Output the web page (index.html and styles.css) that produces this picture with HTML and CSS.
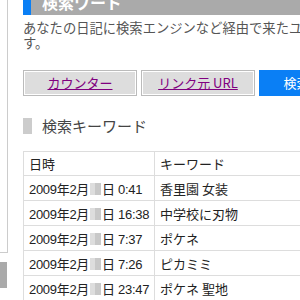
FILE: index.html
```html
<!DOCTYPE html>
<html lang="ja">
<head>
<meta charset="UTF-8">
<meta name="viewport" content="width=device-width, initial-scale=1.0">
<title>検索ワード</title>
<link rel="stylesheet" href="styles.css">
</head>
<body>
<div class="page">
    <div class="side">
        <div class="side-box"></div>
        <div class="side-bar"></div>
    </div>
    <div class="main">
        <h2 class="title"><span class="title-text">検索ワード</span></h2>
        <p class="desc">あなたの日記に検索エンジンなど経由で来たユーザーが使った検索キーワードを表示していま<br>す。</p>
        <ul class="tabs">
            <li class="tab"><a href="#">カウンター</a></li>
            <li class="tab"><a href="#">リンク元 URL</a></li>
            <li class="tab on">検索ワード</li>
        </ul>
        <h3 class="sub"><span class="mark"></span>検索キーワード</h3>
        <table class="log">
            <tr><th class="c-date">日時</th><th>キーワード</th></tr>
            <tr><td class="c-date">2009年2月<span class="blur"></span>日 0:41</td><td>香里園 女装</td></tr>
            <tr><td class="c-date">2009年2月<span class="blur"></span>日 16:38</td><td>中学校に刃物</td></tr>
            <tr><td class="c-date">2009年2月<span class="blur"></span>日 7:37</td><td>ポケネ</td></tr>
            <tr><td class="c-date">2009年2月<span class="blur"></span>日 7:26</td><td>ピカミミ</td></tr>
            <tr><td class="c-date">2009年2月<span class="blur"></span>日 23:47</td><td>ポケネ 聖地</td></tr>
            <tr><td class="c-date">2009年2月<span class="blur"></span>日 21:05</td><td>ポケネ</td></tr>
        </table>
    </div>
</div>
</body>
</html>
```

FILE: styles.css
```css
html, body {
    margin: 0;
    padding: 0;
    background: #fff;
    overflow: hidden;
}
body {
    font-family: "Noto Sans CJK JP", sans-serif;
    font-size: 13px;
    color: #222;
}
.page {
    display: flex;
    align-items: flex-start;
}
.side {
    width: 8px;
    flex: none;
}
.side-box {
    height: 253px;
    border-right: 1px solid #ccc;
    border-bottom: 1px solid #ccc;
    box-sizing: border-box;
}
.side-bar {
    height: 26px;
    margin-top: 9px;
    width: 7px;
    background: #aaa;
}
.main {
    width: 600px;
    flex: none;
    margin-left: 15px;
}
.title {
    margin: -10px 0 0 0;
    height: 25px;
    background: #aaa;
    border-left: 8px solid #0a7ff5;
    color: #fff;
    font-size: 16px;
    font-weight: bold;
    line-height: 25px;
    padding-left: 11px;
}
.desc {
    margin: 5px 0 0 0;
    font-size: 13.3px;
    line-height: 15px;
    color: #555;
    white-space: nowrap;
}
.tabs {
    list-style: none;
    margin: 20px 0 0 0;
    padding: 0;
    display: flex;
    gap: 4px;
}
.tab {
    width: 114px;
    height: 26px;
    box-sizing: border-box;
    background: #ddd;
    border: 1px solid #bbb;
    box-shadow: inset 0 0 0 1px #fff;
    text-align: center;
    line-height: 24px;
}
.tab a {
    color: #800080;
    text-decoration: underline;
}
.tab.on {
    background: #0a7ff5;
    border-color: #0a7ff5;
    box-shadow: none;
    color: #fff;
}
.sub {
    margin: 22px 0 0 0;
    display: flex;
    align-items: center;
    gap: 10px;
    font-size: 15px;
    font-weight: normal;
    color: #444;
    line-height: 16px;
}
.mark {
    width: 9px;
    height: 16px;
    background: #ccc;
}
.log {
    margin-top: 17px;
    border-collapse: collapse;
    width: 420px;
}
.log th, .log td {
    border: 1px solid #ddd;
    padding: 0 5px;
    height: 23px;
    text-align: left;
    font-weight: normal;
    white-space: nowrap;
}
.log td {
    height: 24px;
}
.c-date {
    width: 117px;
}
td.c-date {
    font-family: "Liberation Sans Narrow", "Liberation Sans", "Noto Sans CJK JP", sans-serif;
    letter-spacing: -0.3px;
}
.blur {
    display: inline-block;
    width: 11px;
    height: 12px;
    margin: 0 1px;
    vertical-align: -1px;
    background: linear-gradient(90deg, #ddd 0 50%, #c8c8c8 50%);
}
```
